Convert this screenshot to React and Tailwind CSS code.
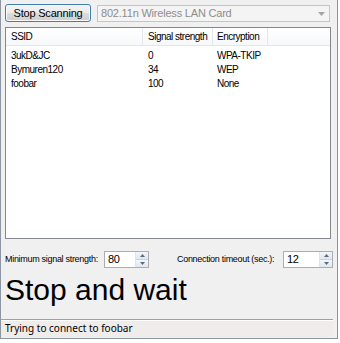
import React from "react";

const ui = { fontFamily: '"Liberation Sans", Arial, sans-serif' };
const seg = { fontFamily: '"Noto Sans", "Open Sans", sans-serif' };

function Spin({ value, w }) {
  return (
    <div className={`flex h-[17px] shrink-0 ${w} border border-[#abadb3] bg-white`}>
      <div className="flex-1 pl-[3px] text-[11px] leading-[15px] text-black" style={ui}>{value}</div>
      <div className="flex w-[13px] flex-col border-l border-[#e3e3e3]">
        <div className="flex flex-1 items-center justify-center bg-[linear-gradient(#f3f6fa,#dfe7f0)] border-b border-[#c9d3de]">
          <svg width="5" height="3" viewBox="0 0 5 3"><path d="M0 3 L2.5 0 L5 3Z" fill="#5d6b7a" /></svg>
        </div>
        <div className="flex flex-1 items-center justify-center bg-[linear-gradient(#f3f6fa,#dfe7f0)]">
          <svg width="5" height="3" viewBox="0 0 5 3"><path d="M0 0 L2.5 3 L5 0Z" fill="#5d6b7a" /></svg>
        </div>
      </div>
    </div>
  );
}

const rows = [
  ["3ukD&JC", "0", "WPA-TKIP"],
  ["Bymuren120", "34", "WEP"],
  ["foobar", "100", "None"],
];

export default function App() {
  return (
    <div className="h-[343px] w-[340px] bg-white">
      <div className="flex h-[339px] w-[338px] flex-col border-b border-l border-r border-[#8c96a3] bg-[#f0f0f0]">
        <div className="flex items-start gap-[6px] pl-[4px] pt-[4px]">
          <div
            className="flex h-[18px] w-[86px] items-center justify-center whitespace-nowrap rounded-[3px] border border-[#3c7fb1] bg-[linear-gradient(#f4f4f4_0%,#ebebeb_50%,#dddddd_51%,#cfcfcf_100%)] text-[11px] tracking-[-0.2px] text-black shadow-[inset_0_0_0_1px_#fcfcfc]"
            style={ui}
          >
            Stop Scanning
          </div>
          <div className="mt-[1px] flex h-[17px] w-[233px] items-center justify-between whitespace-nowrap border border-[#c5c5c5] bg-[#f4f4f4] pl-[3px] pr-[4px] text-[11px] tracking-[-0.2px] text-[#8d8d8d]" style={ui}>
            <span>802.11n Wireless LAN Card</span>
            <svg width="7" height="4" viewBox="0 0 7 4"><path d="M0 0 H7 L3.5 4Z" fill="#a5a5a5" /></svg>
          </div>
        </div>

        <div className="ml-[4px] mt-[5px] h-[212px] w-[326px] border border-[#828790] bg-white" style={ui}>
          <div className="flex h-[18px] whitespace-nowrap border-b border-[#e5e5e5] bg-[linear-gradient(#ffffff,#f7f8fa)] text-[10px] leading-[17px] tracking-[-0.5px] text-black">
            <div className="w-[137px] border-r border-[#e3e6ea] pl-[5px]">SSID</div>
            <div className="w-[70px] border-r border-[#e3e6ea] pl-[5px]">Signal strength</div>
            <div className="w-[55px] border-r border-[#e3e6ea] pl-[4px]">Encryption</div>
            <div className="flex-1" />
          </div>
          <div className="pt-[3px]">
            {rows.map((r) => (
              <div key={r[0]} className="flex h-[14px] whitespace-nowrap text-[10px] leading-[14px] tracking-[-0.5px] text-black">
                <div className="w-[137px] pl-[5px]">{r[0]}</div>
                <div className="w-[70px] pl-[5px]">{r[1]}</div>
                <div className="w-[55px] pl-[4px]">{r[2]}</div>
              </div>
            ))}
          </div>
        </div>

        <div className="mt-[12px] flex h-[17px] items-center whitespace-nowrap pl-[4px] text-[9px] tracking-[-0.3px] text-black" style={ui}>
          <span className="w-[99px] shrink-0">Minimum signal strength:</span>
          <Spin value="80" w="w-[45px]" />
          <span className="ml-[28px] w-[106px] shrink-0">Connection timeout (sec.):</span>
          <Spin value="12" w="w-[50px]" />
        </div>

        <div className="whitespace-nowrap pl-[4px] pt-[2px] text-[30px] leading-[40px] text-black" style={ui}>
          Stop and wait
        </div>

        <div className="mt-auto mb-[1px] mr-[4px] flex h-[18px] items-center whitespace-nowrap border-t border-[#a0a0a0] bg-[#f0ecea] pl-[4px] text-[10px] text-black shadow-[inset_0_1px_0_#ffffff]" style={seg}>
          Trying to connect to foobar
        </div>
      </div>
    </div>
  );
}
